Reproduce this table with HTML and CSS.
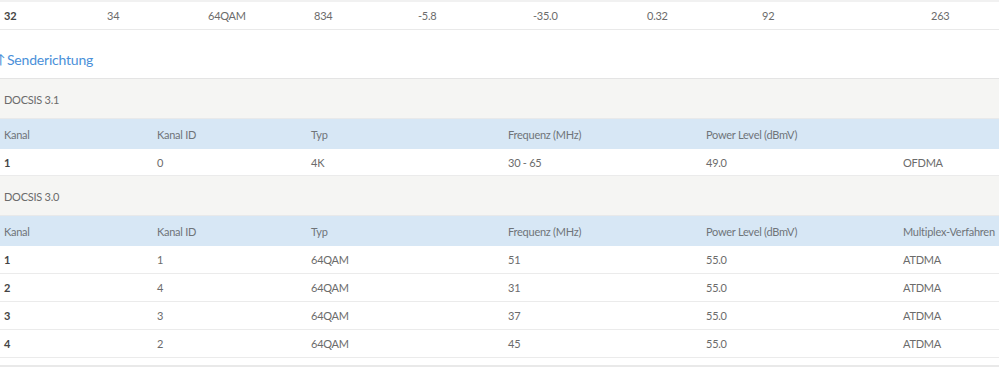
FILE: index.html
```html
<!DOCTYPE html>
<html lang="de">
<head>
<meta charset="utf-8">
<link rel="stylesheet" href="styles.css">
</head>
<body>
<div class="page">
  <div class="top-table">
    <div class="row top-row">
      <span class="b">32</span><span>34</span><span>64QAM</span><span>834</span><span>-5.8</span><span>-35.0</span><span>0.32</span><span>92</span><span>263</span>
    </div>
  </div>

  <h2 class="section-title"><span class="arrow">↑</span>Senderichtung</h2>

  <div class="group">DOCSIS 3.1</div>
  <div class="grid head">
    <span>Kanal</span><span>Kanal ID</span><span>Typ</span><span>Frequenz (MHz)</span><span>Power Level (dBmV)</span><span></span>
  </div>
  <div class="grid data short">
    <span class="b">1</span><span>0</span><span>4K</span><span>30 - 65</span><span>49.0</span><span>OFDMA</span>
  </div>

  <div class="group">DOCSIS 3.0</div>
  <div class="grid head">
    <span>Kanal</span><span>Kanal ID</span><span>Typ</span><span>Frequenz (MHz)</span><span>Power Level (dBmV)</span><span>Multiplex-Verfahren</span>
  </div>
  <div class="grid data">
    <span class="b">1</span><span>1</span><span>64QAM</span><span>51</span><span>55.0</span><span>ATDMA</span>
  </div>
  <div class="grid data">
    <span class="b">2</span><span>4</span><span>64QAM</span><span>31</span><span>55.0</span><span>ATDMA</span>
  </div>
  <div class="grid data">
    <span class="b">3</span><span>3</span><span>64QAM</span><span>37</span><span>55.0</span><span>ATDMA</span>
  </div>
  <div class="grid data">
    <span class="b">4</span><span>2</span><span>64QAM</span><span>45</span><span>55.0</span><span>ATDMA</span>
  </div>
  <div class="footer-band"></div>
</div>
</body>
</html>
```

FILE: styles.css
```css
html, body {
  margin: 0;
  padding: 0;
  background: #ffffff;
}

.page {
  font-family: Lato, "Noto Sans", sans-serif;
  font-size: 11px;
  letter-spacing: -0.25px;
  color: #6b6b6b;
  width: 999px;
  overflow: hidden;
}

.b {
  font-weight: 700;
  color: #444444;
}

.top-table {
  border-top: 2px solid #f1f1f1;
}

.top-row {
  display: grid;
  grid-template-columns: 103px 101px 106px 104px 115px 114px 115px 169px 1fr;
  height: 27px;
  align-items: center;
  padding-left: 4px;
  border-bottom: 1px solid #e9e9e9;
}

.section-title {
  margin: 0 0 0 -4px;
  height: 49px;
  display: flex;
  align-items: center;
  padding-top: 10px;
  box-sizing: border-box;
  font-size: 14px;
  letter-spacing: -0.2px;
  font-weight: 400;
  color: #4a90d9;
  border-bottom: 1px solid #e4e4e4;
}

.arrow {
  display: inline-block;
  width: 11px;
  font-size: 13px;
}

.group {
  height: 40px;
  display: flex;
  align-items: center;
  padding-left: 4px;
  padding-top: 1px;
  box-sizing: border-box;
  background: #f5f5f3;
  border-bottom: 1px solid #e8e9ea;
}

.grid {
  display: grid;
  grid-template-columns: 153px 154px 197px 198px 197px 1fr;
  align-items: center;
  padding-left: 4px;
}

.grid span {
  white-space: nowrap;
}

.head {
  height: 30px;
  box-sizing: border-box;
  background: #d7e7f5;
  color: #6f7479;
}

.data {
  height: 28px;
  box-sizing: border-box;
  background: #ffffff;
  border-bottom: 1px solid #ebebeb;
}

.data.short {
  height: 27px;
}

.footer-band {
  height: 7px;
  background: #ffffff;
  border-bottom: 2px solid #e9e9e9;
}
```
